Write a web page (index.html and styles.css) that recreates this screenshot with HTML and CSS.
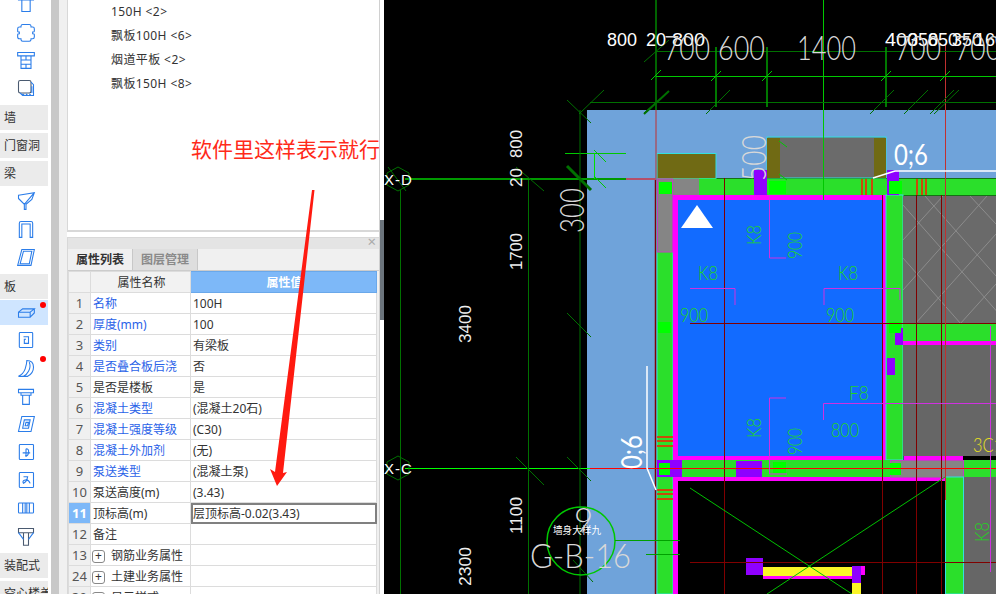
FILE: index.html
```html
<!DOCTYPE html>
<html lang="zh-CN">
  <head>
    <meta charset="UTF-8" />
    <meta name="viewport" content="width=device-width, initial-scale=1.0" />
    <title>属性列表</title>
    <link rel="stylesheet" href="styles.css">
  </head>
  <body>
    <div class="app">
      <!-- left icon rail -->
      <div class="rail">
        <div class="ico"><svg viewBox="0 0 24 24"><path d="M3 2h18v5H3zM7 7h10v14H7z"/></svg></div>
        <div class="ico"><svg viewBox="0 0 24 24"><path d="M8 3h8q2 0 2 2v1h2q2 0 2 2v3q0 1-2 1v2q2 0 2 1v3q0 2-2 2h-2v1q0 2-2 2H8q-2 0-2-2v-1H4q-2 0-2-2v-3q0-1 2-1v-2q-2 0-2-1V8q0-2 2-2h2V5q0-2 2-2z"/></svg></div>
        <div class="ico"><svg viewBox="0 0 24 24"><path d="M2 3h20v4H2zM6 7h12v15H6zM6 12h12M6 17h12M12 7v5M12 17v5"/></svg></div>
        <div class="ico"><svg viewBox="0 0 24 24"><rect class="dark" x="3" y="3" width="15" height="15" rx="2"/><path d="M18 5l3 3v13H8l-3-3M8 19l2 2M12 19l2 2M16 19l2 2M19 10v8"/></svg></div>
        <div class="cat">墙</div>
        <div class="cat">门窗洞</div>
        <div class="cat">梁</div>
        <div class="ico"><svg viewBox="0 0 24 24"><path d="M3 5l19-3-3 8-7 6v6h-2V16L3 9zM3 9l7 7M22 2L10 16"/></svg></div>
        <div class="ico"><svg viewBox="0 0 24 24"><path d="M4 22V5q0-2 2-2h12q2 0 2 2v17h-3V6H7v16z"/></svg></div>
        <div class="ico"><svg viewBox="0 0 24 24"><path d="M7 3h15l-4 19H2zM9 5h10l-3 15H5z"/></svg></div>
        <div class="cat">板</div>
        <div class="ico on dot"><svg viewBox="0 0 24 24"><path d="M3 11h14v6H3zM3 11l5-4h14l-5 4M22 7v5l-5 5"/></svg></div>
        <div class="ico"><svg viewBox="0 0 24 24"><rect x="4" y="3" width="16" height="18" rx="1"/><path d="M9 8h6v8h-5v-5h2"/></svg></div>
        <div class="ico dot"><svg viewBox="0 0 24 24"><path d="M13 3q8 0 8 8 0 7-7 11H3q6-3 8-9 2-6 2-10zM16 5q2 6-1 11-2 4-6 6"/></svg></div>
        <div class="ico"><svg viewBox="0 0 24 24"><path d="M3 4h18v4H3zM6 8h12v3H6zM8 11h8v11H8z"/></svg></div>
        <div class="ico"><svg viewBox="0 0 24 24"><path d="M7 3h15l-4 18H3zM10 7h7l-2 10H8zM12 10h3l-1 4h-3z"/></svg></div>
        <div class="ico"><svg viewBox="0 0 24 24"><rect x="4" y="3" width="17" height="18" rx="1"/><path d="M8 13h9M12 8q4 0 3 5t-4 3M12 8v10"/></svg></div>
        <div class="ico"><svg viewBox="0 0 24 24"><rect x="4" y="3" width="17" height="18" rx="1"/><path d="M9 8h5q-1 6-5 8-2-3 2-4 4-1 6 4"/></svg></div>
        <div class="ico"><svg viewBox="0 0 24 24"><rect x="3" y="6" width="18" height="12" rx="1"/><path d="M8 6v12M16 6v12M11 6v12M13 6v12"/></svg></div>
        <div class="ico"><svg viewBox="0 0 24 24"><path class="dark" d="M3 3h18v5H3zM9 8h6v15H9z"/><path d="M3 8l6 8M21 8l-6 8"/></svg></div>
        <div class="cat">装配式</div>
        <div class="cat">空心楼盖</div>
      </div>
      <div class="rail-scroll"></div>
      <div class="rail-gap"></div>

      <div class="panels">
        <div class="tree">
          <div class="tree-item">150H &lt;2&gt;</div>
          <div class="tree-item">飘板100H &lt;6&gt;</div>
          <div class="tree-item">烟道平板 &lt;2&gt;</div>
          <div class="tree-item">飘板150H &lt;8&gt;</div>
        </div>

        <div class="props">
          <div class="props-title"><span class="close">×</span></div>
          <div class="tabs">
            <div class="tab active">属性列表</div>
            <div class="tab">图层管理</div>
          </div>
          <table class="grid">
            <colgroup><col class="c-num"><col class="c-name"><col class="c-val"></colgroup>
            <tr class="head"><th></th><th>属性名称</th><th class="head-val">属性值</th></tr>
            <tr><td class="num">1</td><td class="link">名称</td><td>100H</td></tr>
            <tr><td class="num">2</td><td class="link">厚度(mm)</td><td>100</td></tr>
            <tr><td class="num">3</td><td class="link">类别</td><td>有梁板</td></tr>
            <tr><td class="num">4</td><td class="link">是否叠合板后浇</td><td>否</td></tr>
            <tr><td class="num">5</td><td>是否是楼板</td><td>是</td></tr>
            <tr><td class="num">6</td><td class="link">混凝土类型</td><td>(混凝土20石)</td></tr>
            <tr><td class="num">7</td><td class="link">混凝土强度等级</td><td>(C30)</td></tr>
            <tr><td class="num">8</td><td class="link">混凝土外加剂</td><td>(无)</td></tr>
            <tr><td class="num">9</td><td class="link">泵送类型</td><td>(混凝土泵)</td></tr>
            <tr><td class="num">10</td><td>泵送高度(m)</td><td>(3.43)</td></tr>
            <tr><td class="num sel">11</td><td>顶标高(m)</td><td class="editing">层顶标高-0.02(3.43)</td></tr>
            <tr><td class="num">12</td><td>备注</td><td></td></tr>
            <tr><td class="num">13</td><td class="group"><span class="plus">+</span>钢筋业务属性</td><td></td></tr>
            <tr><td class="num">24</td><td class="group"><span class="plus">+</span>土建业务属性</td><td></td></tr>
            <tr><td class="num">30</td><td class="group"><span class="plus">+</span>显示样式</td><td></td></tr>
          </table>
        </div>
      </div>

      <div class="splitter"><div class="splitter-bar"></div></div>

      <!-- cad drawing, coordinates are page pixels -->
      <div class="canvas">
        <svg class="cad" viewBox="384 0 612 594">
          <!-- walls and rooms -->
          <rect x="587" y="110" width="409" height="68" fill="#6fa3da"/>
          <rect x="587" y="110" width="70" height="484" fill="#6fa3da"/>
          <rect x="657" y="153.500" width="59" height="25" fill="#706a14" stroke="#33e0e0"/>
          <rect x="767" y="137" width="119" height="41" fill="#6b6b6b" stroke="#33e0e0"/>
          <rect x="767" y="138" width="13" height="40" fill="#706a14"/>
          <rect x="874" y="138" width="12" height="40" fill="#706a14"/>
          <rect x="657" y="178.500" width="339" height="17" fill="#2bdf2b"/>
          <rect x="657" y="195" width="16" height="399" fill="#2bdf2b" stroke="#33e0e0"/>
          <rect x="657" y="178.500" width="42" height="17" fill="#858585"/>
          <rect x="657.500" y="179" width="15" height="73" fill="#858585" stroke="#c040c0"/>
          <rect x="673" y="195" width="213" height="265" fill="#ff00ff"/>
          <rect x="678" y="200" width="204" height="256" fill="#126bff"/>
          <rect x="886" y="195" width="17" height="265" fill="#2bdf2b" stroke="#33e0e0"/>
          <rect x="903" y="196" width="93" height="128" fill="#6a6a6a"/>
          <path d="M903 240l40-44M903 290l84-94M915 324l81-90M960 324l36-40M903 205l105 119M925 196l71 80M903 258l58 66M970 196l26 28" stroke="#8c8c8c" fill="none"/>
          <rect x="903" y="324" width="93" height="17" fill="#2bdf2b"/>
          <rect x="903" y="341" width="93" height="4" fill="#ff00ff"/>
          <rect x="903" y="345" width="93" height="111" fill="#666"/>
          <rect x="904" y="456" width="59" height="4" fill="#ff00ff"/>
          <rect x="673" y="460" width="323" height="17" fill="#2bdf2b"/>
          <rect x="673" y="477" width="272" height="4" fill="#ff00ff"/>
          <rect x="673" y="481" width="5" height="113" fill="#ff00ff"/>
          <rect x="890.500" y="460.500" width="73" height="17" fill="#858585" stroke="#c040c0"/>
          <rect x="963" y="477" width="33" height="117" fill="#666"/>
          <rect x="945.500" y="477" width="18" height="117" fill="#2bdf2b" stroke="#33e0e0"/>

          <!-- purple, lime, yellow blocks -->
          <g fill="#8f00ff">
            <rect x="754" y="170" width="13" height="25"/>
            <rect x="887" y="170" width="12" height="25"/>
            <rect x="736" y="461" width="26" height="16"/>
            <rect x="657" y="460" width="25" height="17"/>
            <rect x="895" y="328" width="8" height="17"/>
            <rect x="887" y="358" width="8" height="17"/>
            <rect x="746" y="558" width="17" height="17"/>
            <rect x="852" y="566" width="9" height="17"/>
          </g>
          <g fill="#00ff00">
            <rect x="659" y="182" width="13" height="12"/>
            <rect x="769" y="181" width="17" height="13"/>
            <rect x="889" y="181" width="13" height="13"/>
            <rect x="773" y="462" width="13" height="11"/>
            <rect x="890" y="463" width="11" height="12"/>
            <rect x="659" y="463" width="11" height="12"/>
            <rect x="889" y="322" width="12" height="11"/>
            <rect x="658" y="322" width="13" height="11"/>
          </g>
          <rect x="763" y="567" width="89" height="9" fill="#faf527"/>
          <rect x="763" y="576" width="89" height="3" fill="#ff00ff"/>
          <rect x="861" y="566" width="4" height="9" fill="#ff00ff"/>
          <rect x="852" y="583" width="9" height="11" fill="#faf527"/>
          <path d="M697 205l16 23h-32z" fill="#fff"/>

          <!-- axis lines -->
          <g fill="none" stroke-width="1">
            <path d="M724.500 178V594M882.500 195V594M916.500 195V594M941.500 195V594M690 323.500H996M690 562.500H996" stroke="#800000"/>
            <path d="M655.500 178V594" stroke="#800000" stroke-width="1.500"/>
            <path d="M656 110V178M945.500 45V500" stroke="#c03030"/>
            <path d="M590 468.500H996" stroke="#ff0000"/>
            <path d="M405 468.500H590" stroke="#00ff00"/>
            <path d="M656 0V110M823.500 0V200M656 76.500H996M565 153.500H626" stroke="#00c800"/>
            <path d="M656 51.500H996M590 102.500H996M580 110V594M400.500 190V594M528.500 178V594" stroke="#007000"/>
            <path d="M405 179H580" stroke="#009900" stroke-width="2"/>
            <path d="M580 179H626" stroke="#009900" stroke-width="2"/>
            <path d="M626 179H656" stroke="#b5506a" stroke-width="2"/>
            <path d="M594.500 153V179" stroke="#00e000"/>
            <path d="M716 47V107M767 47V107M886 47V107" stroke="#00a000" stroke-width="1.500"/>
          </g>

          <!-- ticks -->
          <g fill="none" stroke="#007000">
            <path d="M579 114l25-24M567 100l24 23M644 113l25-22M644 62l25-22M706 114l24-24M870 114l24-24M904 114l24-24M930 114l24-24M934 114l25-24M516 167l28 24M388 167l18 24M567 313l24 24M516 457l28 28M567 457l24 24M573 560l20 22"/>
            <path d="M567 166l24 24" stroke-width="3"/>
            <path d="M644 114l25-23" stroke-width="2"/>
          </g>
          <g fill="none" stroke="#00c800">
            <path d="M651 80l10-10M711 81l10-10M762 81l10-10M881 81l10-10M940 81l10-10M594 150l12 12M594 176l12 12M779 141l8 6M779 174l8 6"/>
          </g>
          <path d="M862 179v16M866 179v16M872 179v16M917 179v16M922 179v16M926 179v16M657 437h16M657 441h16M657 446h16M657 490h16M657 494h16M657 499h16" stroke="#ff1a00" fill="none" stroke-width="1.500"/>

          <!-- magenta leaders -->
          <path d="M769.500 195V258H786M690 288.500H735V305M824 305V288.500H900V300M786 398H769.500V474H787M823.500 420V403.500H996M990.500 326V572" stroke="#d030e0" fill="none"/>

          <!-- crossing lines, circle, hexagons -->
          <path d="M690 488L852 594M945 477L767 594" stroke="#00c000" fill="none"/>
          <circle cx="581" cy="541" r="34" stroke="#00c800" fill="none" stroke-width="1.500"/>
          <path d="M615 540.500H680M646 554.500H680" stroke="#00a000" fill="none"/>
          <path d="M398 167l11 6v12l-11 6-11-6v-12zM398 456l11 6v12l-11 6-11-6v-12z" stroke="#007000" fill="none"/>

          <!-- leaders -->
          <path d="M873 178L895 171H996M647 366V468L656 490" stroke="#fff" stroke-width="1.500" fill="none"/>

          <!-- dimensions -->
          <g class="dim">
            <text x="607" y="46" textLength="30" lengthAdjust="spacingAndGlyphs">800</text>
            <text x="646" y="46" textLength="20" lengthAdjust="spacingAndGlyphs">20</text>
            <text x="672" y="46" textLength="33" lengthAdjust="spacingAndGlyphs">800</text>
            <text x="885" y="46" textLength="33" lengthAdjust="spacingAndGlyphs">400</text>
            <text x="908" y="46" textLength="30" lengthAdjust="spacingAndGlyphs">350</text>
            <text x="928" y="46" textLength="30" lengthAdjust="spacingAndGlyphs">850</text>
            <text x="952" y="46" textLength="30" lengthAdjust="spacingAndGlyphs">350</text>
            <text x="975" y="46" textLength="30" lengthAdjust="spacingAndGlyphs">160</text>
            <text class="small" transform="translate(522 158) rotate(-90)" textLength="28" lengthAdjust="spacingAndGlyphs">800</text>
            <text class="small" transform="translate(522 187) rotate(-90)" textLength="19" lengthAdjust="spacingAndGlyphs">20</text>
            <text class="small" transform="translate(522 270) rotate(-90)" textLength="37" lengthAdjust="spacingAndGlyphs">1700</text>
            <text class="small" transform="translate(471 343) rotate(-90)" textLength="38" lengthAdjust="spacingAndGlyphs">3400</text>
            <text class="small" transform="translate(522 534) rotate(-90)" textLength="37" lengthAdjust="spacingAndGlyphs">1100</text>
            <text class="small" transform="translate(471 586) rotate(-90)" textLength="39" lengthAdjust="spacingAndGlyphs">2300</text>
            <text class="big" x="894" y="165" textLength="34" lengthAdjust="spacingAndGlyphs">0;6</text>
            <text class="big" transform="translate(642 469) rotate(-90)" textLength="34" lengthAdjust="spacingAndGlyphs">0;6</text>
            <text class="axis" x="384" y="185">X-D</text>
            <text class="axis" x="384" y="474">X-C</text>
            <text class="note" x="553" y="534" textLength="48" lengthAdjust="spacingAndGlyphs">墙身大样九</text>
          </g>
          <g class="dim-thin">
            <text x="664" y="60" textLength="46" lengthAdjust="spacingAndGlyphs">700</text>
            <text x="718" y="60" textLength="47" lengthAdjust="spacingAndGlyphs">600</text>
            <text x="797" y="60" textLength="59" lengthAdjust="spacingAndGlyphs">1400</text>
            <text x="895" y="60" textLength="46" lengthAdjust="spacingAndGlyphs">700</text>
            <text x="955" y="60" textLength="46" lengthAdjust="spacingAndGlyphs">700</text>
            <text transform="translate(584 233) rotate(-90)" textLength="45" lengthAdjust="spacingAndGlyphs">300</text>
            <text transform="translate(766 181) rotate(-90)" textLength="46" lengthAdjust="spacingAndGlyphs">500</text>
            <text x="530" y="568" textLength="101" lengthAdjust="spacingAndGlyphs">G-B-16</text>
            <text x="574" y="532">9</text>
          </g>
          <g class="dim-green">
            <text x="698" y="280" textLength="20" lengthAdjust="spacingAndGlyphs">K8</text>
            <text x="838" y="280" textLength="20" lengthAdjust="spacingAndGlyphs">K8</text>
            <text x="680" y="322" textLength="28" lengthAdjust="spacingAndGlyphs">900</text>
            <text x="826" y="322" textLength="28" lengthAdjust="spacingAndGlyphs">900</text>
            <text x="849" y="400" textLength="20" lengthAdjust="spacingAndGlyphs">F8</text>
            <text x="831" y="437" textLength="28" lengthAdjust="spacingAndGlyphs">800</text>
            <text transform="translate(761 245) rotate(-90)" textLength="20" lengthAdjust="spacingAndGlyphs">K8</text>
            <text transform="translate(802 259) rotate(-90)" textLength="27" lengthAdjust="spacingAndGlyphs">900</text>
            <text transform="translate(761 438) rotate(-90)" textLength="20" lengthAdjust="spacingAndGlyphs">K8</text>
            <text transform="translate(802 455) rotate(-90)" textLength="27" lengthAdjust="spacingAndGlyphs">900</text>
            <text transform="translate(989 542) rotate(-90)" textLength="20" lengthAdjust="spacingAndGlyphs">K8</text>
            <text class="yellow" x="973" y="452" textLength="30" lengthAdjust="spacingAndGlyphs">3C1</text>
          </g>
        </svg>
      </div>

      <!-- red remark over the panels -->
      <div class="remark">软件里这样表示就行</div>
      <svg class="remark-arrow" viewBox="0 0 60 310">
        <path d="M47 0h2.500L18 283l4-1-10 14-7-17 5 3z"/>
      </svg>
    </div>
  </body>
</html>
```

FILE: styles.css
```css
body,
html {
  margin: 0;
  padding: 0;
  height: 100%;
  overflow: hidden;
  background-color: #000;
  font-family: "Noto Sans", "Noto Sans CJK SC", sans-serif;
  font-size: 12px;
  color: #333;
}

.app {
  position: relative;
  display: flex;
  height: 594px;
  overflow: hidden;
}

/* rail */
.rail {
  width: 48px;
  padding-right: 3px;
  margin-top: -10px;
  background-color: #fff;
  display: flex;
  flex-direction: column;
  flex-shrink: 0;
}

.ico {
  position: relative;
  height: 28px;
  flex-shrink: 0;
  display: flex;
  align-items: center;
  padding-left: 16px;
}

.ico svg {
  width: 20px;
  height: 20px;
  fill: none;
  stroke: #2b7de9;
  stroke-width: 1.300;
}

.ico .dark {
  stroke: #4a5a70;
}

.ico.on {
  background-color: #cfe5ff;
  height: 25px;
  margin: 2px 0 1px;
}

.ico.dot::after {
  content: "";
  position: absolute;
  top: 2px;
  right: 2px;
  width: 6px;
  height: 6px;
  border-radius: 50%;
  background-color: #f00;
}

.cat {
  height: 25px;
  line-height: 25px;
  margin: 3px 0 0;
  padding-left: 4px;
  background-color: #ebebeb;
  flex-shrink: 0;
  white-space: nowrap;
  overflow: hidden;
}

.cat + .ico {
  margin-top: 1px;
}

.rail-scroll {
  width: 8px;
  background-color: #c8c8c8;
  flex-shrink: 0;
}

.rail-gap {
  width: 8px;
  background-color: #f0f0f0;
  flex-shrink: 0;
}

/* panels */
.panels {
  width: 312px;
  flex-shrink: 0;
  background-color: #fff;
  border-right: 1px solid #d0d0d0;
}

.tree {
  height: 232px;
  box-sizing: border-box;
  border-left: 1px solid #d8d8d8;
  border-bottom: 2px solid #d8d8d8;
  padding-left: 43px;
}

.tree-item {
  height: 24px;
  line-height: 24px;
  letter-spacing: 0.4px;
}

.props {
  margin-top: 5px;
  height: 358px;
  background-color: #f0f0f0;
  border-left: 1px solid #d8d8d8;
}

.props-title {
  height: 11px;
  background-color: #e4e4e4;
  border-top: 1px solid #d8d8d8;
  position: relative;
}

.close {
  position: absolute;
  right: 3px;
  top: -4px;
  font-size: 15px;
  line-height: 15px;
  color: #aaa;
}

.tabs {
  display: flex;
  height: 21px;
  border-bottom: 1px solid #ccc;
}

.tab {
  width: 64px;
  line-height: 22px;
  text-align: center;
  font-weight: bold;
  color: #8a8a8a;
  background-color: #dedede;
  border-right: 1px solid #c8c8c8;
}

.tab.active {
  color: #333;
  background-color: #f0f0f0;
}

.grid {
  table-layout: fixed;
  width: 309px;
  border-collapse: collapse;
  background-color: #fff;
}

.c-num {
  width: 22px;
}

.c-name {
  width: 100px;
}

.grid th,
.grid td {
  height: 20px;
  padding: 0 0 0 2px;
  border: 1px solid #dcdcdc;
  font-weight: normal;
  white-space: nowrap;
  overflow: hidden;
}

.grid th {
  text-align: center;
  background-color: #f2f2f2;
}

.grid th.head-val {
  background-color: #7db8f8;
  color: #fff;
  font-weight: bold;
  border-color: #6aa8ea;
}

.grid td.num {
  padding: 0;
  text-align: center;
  background-color: #f0f0f0;
  color: #555;
  font-size: 13px;
}

.grid td.sel {
  background-color: #7db8f8;
  color: #fff;
  font-weight: bold;
}

.grid td.link {
  color: #2a62e8;
}

.grid td.group {
  padding-left: 1px;
}

.grid td.editing {
  outline: 2px solid #808080;
  outline-offset: -2px;
}

.plus {
  display: inline-block;
  box-sizing: border-box;
  width: 13px;
  height: 13px;
  line-height: 10px;
  margin-right: 6px;
  text-align: center;
  border: 1px solid #888;
  border-radius: 3px;
  vertical-align: 0;
}

.splitter {
  width: 4px;
  flex-shrink: 0;
  background-color: #fff;
  padding-top: 220px;
  box-sizing: border-box;
}

.splitter-bar {
  height: 100px;
  background-color: #6b747c;
}

/* drawing */
.canvas {
  flex: 1;
  background-color: #000;
}

.cad {
  display: block;
  width: 612px;
  height: 594px;
}

.dim text {
  font-family: "Liberation Sans", sans-serif;
  font-size: 19px;
  fill: #fff;
}

.dim text.small {
  font-size: 17px;
  fill: #eee;
}

.dim text.big {
  font-family: "Lato", sans-serif;
  font-size: 28px;
}

.dim text.axis {
  font-size: 15px;
  letter-spacing: 1px;
}

.dim text.note {
  font-family: "Noto Sans CJK SC", sans-serif;
  font-size: 10px;
}

.dim-thin text {
  font-family: "Lato", sans-serif;
  font-weight: 300;
  font-size: 33px;
  fill: #d8d8d8;
}

.dim-green text {
  font-family: "Lato", sans-serif;
  font-weight: 300;
  font-size: 20px;
  fill: #1fd41f;
}

.dim-green text.yellow {
  fill: #e8e020;
}

/* remark */
.remark {
  position: absolute;
  left: 191px;
  top: 134px;
  font-size: 21px;
  line-height: 30px;
  color: #ff2a1a;
  white-space: nowrap;
}

.remark-arrow {
  position: absolute;
  left: 265px;
  top: 190px;
  width: 60px;
  height: 310px;
  fill: #ff1a10;
}
```
